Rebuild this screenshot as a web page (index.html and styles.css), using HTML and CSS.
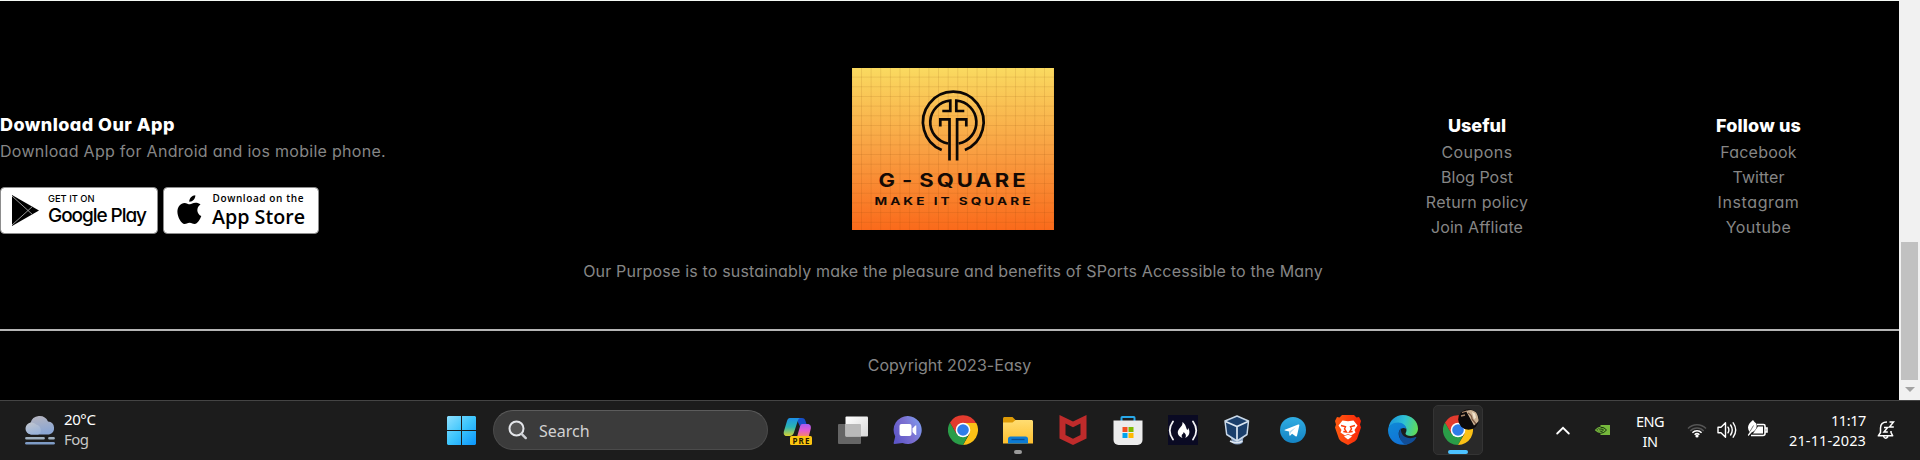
FILE: index.html
```html
<!DOCTYPE html>
<html lang="en">
<head>
<meta charset="utf-8">
<title>G-Square</title>
<link rel="stylesheet" href="styles.css">
</head>
<body>
<div class="viewport">
  <div class="page">
    <footer class="footer">
      <div class="columns">
        <section class="app">
          <h3 class="app-title">Download Our App</h3>
          <p class="app-note">Download App for Android and ios mobile phone.</p>
          <div class="badges">
            <svg class="badge" width="158" height="47" viewBox="0 0 158 47">
              <rect x=".5" y=".5" width="157" height="46" rx="4" fill="#fff" stroke="#8d8d8d"/>
              <path d="M12 8v31l27-15.500z" fill="#000"/>
              <path d="M12 9l21 19M12 38l21-19" stroke="#bbb" stroke-width=".8"/>
              <text x="48" y="14.500" font-size="9.500" textLength="46.500" lengthAdjust="spacingAndGlyphs" class="bt-medium">GET IT ON</text>
              <text x="48" y="34.500" font-size="19" textLength="99" class="bt-google">Google Play</text>
            </svg>
            <svg class="badge" width="156" height="47" viewBox="0 0 156 47">
              <rect x=".5" y=".5" width="155" height="46" rx="4" fill="#fff" stroke="#8d8d8d"/>
              <path d="M32.300 8.300c.3 3.200-2.700 6.700-6 6.500-.3-3.200 2.800-6.400 6-6.500zM37.500 17.500c-4.700 3-3.900 9.600.8 11.600-1.200 3.300-3.900 8-6.700 8-2 0-2.600-1.300-5-1.300s-3.100 1.300-5 1.300c-3.300 0-7.200-7.100-7.200-12.300 0-5.400 3.400-8.900 7.100-8.900 2.200 0 3.700 1.400 5.400 1.400 1.600 0 2.800-1.500 5.600-1.500 2 0 3.800.5 5 1.700z" fill="#000"/>
              <text x="49.500" y="15" font-size="10" textLength="91" class="bt-open">Download on the</text>
              <text x="49" y="36.500" font-size="20" textLength="93" lengthAdjust="spacingAndGlyphs" class="bt-open">App Store</text>
            </svg>
          </div>
        </section>
        <section class="brand">
          <svg class="logo" width="202" height="162" viewBox="0 0 202 162">
            <defs>
              <linearGradient id="sun" x2="0" y2="1"><stop offset="0" stop-color="#fada60"/><stop offset=".5" stop-color="#f9a143"/><stop offset="1" stop-color="#fa6a1b"/></linearGradient>
              <pattern id="grid" x="9" y="8.600" width="9.630" height="9.680" patternUnits="userSpaceOnUse"><path d="M.5 0v9.700M0 .5h9.700" stroke="#7b3d00" stroke-opacity=".15" stroke-width=".8"/></pattern>
            </defs>
            <rect width="202" height="162" fill="url(#sun)"/>
            <rect width="202" height="162" fill="url(#grid)"/>
            <g fill="none" stroke="#0b0705" stroke-width="2.700">
              <path d="M89.700 82a30.300 30.300 0 1 1 23.200 0"/>
              <path d="M96 75.500A21.600 21.600 0 0 1 98.300 32.700V43h-8"/>
              <path d="M106.600 75.500A21.600 21.600 0 0 0 104.300 32.700V43h8"/>
              <path d="M88.300 58.500V51.300h9.200V92.500"/>
              <path d="M114.300 58.500V51.300h-9.200V92.500"/>
            </g>
            <text x="26.500" y="118.700" font-size="18.500" textLength="150" lengthAdjust="spacingAndGlyphs" class="logo-name">G - SQUARE</text>
            <text x="22.500" y="136.700" font-size="10.300" textLength="159" lengthAdjust="spacingAndGlyphs" class="logo-tag">MAKE IT SQUARE</text>
          </svg>
          <p class="purpose">Our Purpose is to sustainably make the pleasure and benefits of SPorts Accessible to the Many</p>
        </section>
        <section class="links">
          <h3 class="useful-title">Useful</h3>
          <ul>
            <li class="ls-4">Coupons</li>
            <li class="ls-0">Blog Post</li>
            <li class="ls-2">Return policy</li>
            <li class="ls-1">Join Affliate</li>
          </ul>
        </section>
        <section class="links">
          <h3 class="follow-title">Follow us</h3>
          <ul>
            <li class="ls-2">Facebook</li>
            <li class="ls-0">Twitter</li>
            <li class="ls-6">Instagram</li>
            <li class="ls-4">Youtube</li>
          </ul>
        </section>
      </div>
      <p class="copyright">Copyright 2023-Easy</p>
    </footer>
  </div>
  <div class="scrollbar"><div class="thumb"></div><div class="arrow-down"></div></div>
</div>

<div class="taskbar">
  <div class="weather">
    <svg width="30" height="30" viewBox="0 0 30 30">
      <defs><linearGradient id="cloud" x2=".3" y2="1"><stop offset="0" stop-color="#b9b6bd"/><stop offset="1" stop-color="#8ba6d4"/></linearGradient>
      <linearGradient id="cloud2" x2=".4" y2="1"><stop offset="0" stop-color="#c3c6cd"/><stop offset="1" stop-color="#9bb4da"/></linearGradient></defs>
      <path d="M6 19.500a6 6 0 0 1-.5-11.500A9.300 9.300 0 0 1 23 6.500a6.600 6.600 0 0 1 1 13z" fill="url(#cloud)"/>
      <path d="M6.500 19.500a6 6 0 1 1 4.600-9.900c3 .7 4.500 3 4.700 5.700.2 2.200-.8 4.200-2.800 4.200z" fill="url(#cloud2)"/>
      <path d="M1.400 23.300h17.200M24.400 23.300h4.200" stroke="#9fb0c0" stroke-width="2.600" stroke-linecap="round"/>
      <path d="M1.400 28.300h27.200" stroke="#7f9cc6" stroke-width="2.600" stroke-linecap="round"/>
    </svg>
    <div class="weather-text"><div class="temp">20°C</div><div class="cond">Fog</div></div>
  </div>

  <svg class="start" width="29" height="29" viewBox="0 0 29 29">
    <defs><linearGradient id="win" gradientUnits="userSpaceOnUse" x2="29" y2="29"><stop offset="0" stop-color="#8ee0ff"/><stop offset=".5" stop-color="#3cc5fd"/><stop offset="1" stop-color="#0a94fb"/></linearGradient></defs>
    <path d="M1 0h13v14H0V1zM15 0h13l1 1v13H15zM0 15h14v14H1l-1-1zM15 15h14v13l-1 1H15z" fill="url(#win)"/>
  </svg>

  <div class="search">
    <svg width="20" height="20" viewBox="0 0 20 20"><circle cx="8.500" cy="8.500" r="7" fill="#555" stroke="#e4e6ea" stroke-width="2"/><path d="M13.600 13.800l4.200 4.300" stroke="#cdd0d4" stroke-width="2.400" stroke-linecap="round"/></svg>
    <span>Search</span>
  </div>

  <div class="apps">
    <svg class="app-icon" viewBox="0 0 30 30">
      <defs><linearGradient id="cp1" x2="0" y2="1"><stop offset="0" stop-color="#1c8fe8"/><stop offset=".5" stop-color="#2bb5b0"/><stop offset="1" stop-color="#d7d231"/></linearGradient>
      <linearGradient id="cp2" x2="0" y2="1"><stop offset="0" stop-color="#a45cf3"/><stop offset=".5" stop-color="#e35ccf"/><stop offset="1" stop-color="#f98a5b"/></linearGradient></defs>
      <path d="M13 3h6c2 0 3 1 3.500 3l1 3h-3.500c-2 0-2.500 1-3 2.500z" fill="#164fc9"/>
      <path d="M7 3h11c-2.500 0-3 2-3.600 4l-3.600 11c-.8 2-2 3-4 3H3.500C1 21 .2 18.500 1 16L4 6c.6-2 1.500-3 3-3z" fill="url(#cp1)"/>
      <path d="M19 9h5.500c3 0 3.800 2.500 3.200 5l-2 8H14l3-10.500c.5-1.700 1-2.500 2-2.500z" fill="url(#cp2)"/>
      <rect x="7" y="21" width="22" height="9" rx="1.500" fill="#fcc511"/>
      <text x="9.500" y="28.600" font-size="8" textLength="17" class="pre">PRE</text>
    </svg>
    <svg class="app-icon" viewBox="0 0 30 30">
      <defs><linearGradient id="tv" x2="1" y2="1"><stop offset="0" stop-color="#fff"/><stop offset="1" stop-color="#d7d7d7"/></linearGradient></defs>
      <rect x="0" y="9" width="23" height="20" rx="1" fill="#656565"/><rect x="7.500" y="1.500" width="22.500" height="20" rx="1" fill="url(#tv)"/><path d="M7.500 9H22a1 1 0 0 1 1 1v11.500H7.500z" fill="#b9b9b9"/>
    </svg>
    <svg class="app-icon" viewBox="0 0 30 30">
      <defs><linearGradient id="ch" x1="0" y1=".7" x2="1" y2=".2"><stop offset="0" stop-color="#5d56c8"/><stop offset=".5" stop-color="#7b6fd0"/><stop offset="1" stop-color="#7d9cf0"/></linearGradient></defs>
      <path d="M15 1a14 14 0 1 1-5.500 27L1.500 29c-.8 0-1-.5-.8-1.200l1.500-6.300A14 14 0 0 1 15 1z" fill="url(#ch)"/>
      <rect x="6.500" y="9" width="12" height="12" rx="2" fill="#fff"/><path d="M19.500 13.500l2.800-3h1v9.500h-1l-2.800-3z" fill="#fff"/>
    </svg>
    <svg class="app-icon" viewBox="0 0 30 30">
      <path d="M15 8H28.300A15 15 0 0 1 15 30l6.500-11.200z" fill="#fbc116"/><path d="M2 7.500L8.500 18.700 15 22l6-3.500L15 30A15 15 0 0 1 2 7.500z" fill="#2a9d48"/><path d="M15 8L8.500 18.700 2 7.500a15 15 0 0 1 26 .5z" fill="#e33b2e"/>
      <circle cx="15" cy="15" r="7.300" fill="#fff"/><circle cx="15" cy="15" r="5.800" fill="#2f7de9"/>
    </svg>
    <div class="app-slot">
      <svg class="app-icon" viewBox="0 0 30 30">
        <defs><linearGradient id="fo" x2="0" y2="1"><stop offset="0" stop-color="#ffdd72"/><stop offset="1" stop-color="#fdbf2e"/></linearGradient></defs>
        <path d="M0 3.500C0 2.700.7 2 1.500 2h8l3.500 3.500L11 9H0z" fill="#dd9a06"/><path d="M0 7.500h9.500L12.500 5H28.500c.8 0 1.500.7 1.500 1.500V28.500H0z" fill="url(#fo)"/>
        <path d="M5 28.500v-4.500a2.500 2.500 0 0 1 2.500-2.500h15A2.500 2.500 0 0 1 25 24v4.500z" fill="#0c7bd4"/><path d="M8.500 24.500h13" stroke="#084f94" stroke-width="1.300"/>
      </svg>
      <span class="dot"></span>
    </div>
    <svg class="app-icon" viewBox="0 0 30 30"><path d="M1.500 0L15 6.500 28.500 0v23.500L15 30 1.500 23.500zM7.500 8.500v11.500L15 23.700l7.500-3.700V8.500L15 12.300z" fill="#bf2b2b" fill-rule="evenodd"/></svg>
    <svg class="app-icon" viewBox="0 0 30 30">
      <path d="M8.500 7V2.700c0-.5.3-.8.800-.8h11.400c.5 0 .8.300.8.800V7" fill="none" stroke="#28a8e8" stroke-width="2"/>
      <path d="M.5 5.500h29V25a5 5 0 0 1-5 5h-19a5 5 0 0 1-5-5z" fill="#ececec"/>
      <path d="M9.500 12h5v5h-5z" fill="#f25022"/><path d="M15.500 12h5v5h-5z" fill="#7fba00"/><path d="M9.500 18h5v5h-5z" fill="#00a4ef"/><path d="M15.500 18h5v5h-5z" fill="#ffb900"/>
    </svg>
    <svg class="app-icon" viewBox="0 0 30 30">
      <rect width="30" height="30" fill="#0a0a23"/><path d="M5 6.500q-6.500 9 0 18M25 6.500q6.500 9 0 18" fill="none" stroke="#f2f2f5" stroke-width="1.800" stroke-linecap="round"/>
      <path d="M14.500 7c3.500 2.500 3 5 4.800 8 .9-.7.800-1.500.6-2.300 2.600 3.500 2 8-2.600 10.300 1.300-2.500.6-4-1.700-6 .2 2-2 2-2 4 0 .8.400 1.500 1 2-4.800-1.700-6.300-5.800-3.200-9.500 2.200-2.500 3.300-3.500 3.100-6.500z" fill="#fff"/>
    </svg>
    <svg class="app-icon" viewBox="0 0 30 30">
      <path d="M7.500 22h13l-1 6q-5.500 3-10 0z" fill="#7f99bd"/><path d="M7 26q6.500 3.500 12.500 0" stroke="#dfe8f3" stroke-width="1.500" fill="none"/>
      <path d="M14 1L25.500 6 24 19.500 14 26 3.700 19.500 2 6z" fill="#1b3f6b" stroke="#c9d8e8" stroke-width="1.500" stroke-linejoin="round"/>
      <path d="M2.500 6.500L14 11.500l11-5M14 11.500V25.500" stroke="#dbe6f1" stroke-width="1.700" fill="none"/>
    </svg>
    <svg class="app-icon" viewBox="0 0 30 30">
      <defs><linearGradient id="tg" x2="0" y2="1"><stop offset="0" stop-color="#30ade3"/><stop offset="1" stop-color="#1483c3"/></linearGradient></defs>
      <circle cx="15" cy="15" r="13" fill="url(#tg)"/><path d="M6.800 14.700L20.200 9.500c.8-.3 1.300.1 1.100 1L19 20.800c-.2.900-.8 1-1.500.5l-3.400-2.500-1.800 1.700c-.5.4-.9.300-.9-.4l-.4-3.500-4.100-1.200c-.6-.2-.6-.5-.1-.7z" fill="#fff"/><path d="M11.300 16.500l6.500-4.300-5 5.200-.8 2.500z" fill="#b4d9ee"/>
    </svg>
    <svg class="app-icon" viewBox="0 0 30 30">
      <defs><linearGradient id="br" x2="1" y2="0"><stop offset="0" stop-color="#ff5a10"/><stop offset="1" stop-color="#f9260a"/></linearGradient></defs>
      <path d="M9 0h12l2.500 2.500L26 2l2 4-1 3.500 1 3-4 11.500L22 26.300 15 30l-7-3.700L6 24 2 12.500l1-3L2 6l2-4 2.500.5z" fill="url(#br)"/>
      <path d="M9.500 5.500L15 6.200l5.500-.7 4 5-3 4.500 1 2.500-4.500 3L15 18.700l-3 1.800-4.500-3 1-2.500-3-4.500z" fill="#fff"/><path d="M11 21.500l4-2 4 2-4 3z" fill="#fff"/>
      <path d="M8 10.500l4.500 1.300-1 2.200 2 3-3.200-.5M22 10.500l-4.500 1.300 1 2.200-2 3 3.200-.5" fill="none" stroke="#fb3d0c" stroke-width="1.400"/>
    </svg>
    <svg class="app-icon" viewBox="0 0 30 30">
      <defs><linearGradient id="eg1" x1="0" y1=".4" x2="1" y2=".6"><stop offset="0" stop-color="#1a95dd"/><stop offset=".5" stop-color="#2fc2d4"/><stop offset="1" stop-color="#61dc55"/></linearGradient>
      <linearGradient id="eg2" x2=".5" y2="1"><stop offset="0" stop-color="#0f8ad6"/><stop offset="1" stop-color="#1173d6"/></linearGradient></defs>
      <path d="M.5 13C1.500 5.500 7.500 0 15 0c9 0 15 6.500 15 13.500 0 4.500-3 7.500-7 7.500-3.200 0-5.500-1.200-5.500-2.500 0-.8 1-1.300 1-3.500 0-3.500-3.500-6.500-8-6.500-5 0-8.500 2.200-10 4.500z" fill="url(#eg1)"/>
      <path d="M0 15C0 11 4.500 7.500 10 7.500c5 0 8.500 3.500 8.500 7.500 0-2.500-6-3-7.500 1.500-1.500 5 2.500 11 8.500 12.700C9.500 32 0 25.500 0 15z" fill="url(#eg2)"/>
      <path d="M13 13c-3 3-3 12 4 16.700 5.500-.5 9-3.200 11.300-7 .3-.6-.2-.8-.7-.6C21 25 12 22 13 13z" fill="#114d96"/>
    </svg>
    <div class="app-slot active">
      <svg class="app-icon" viewBox="0 0 30 30">
        <path d="M2 7.500L8.500 18.700 15 22l6-3.500L15 30A15 15 0 0 1 2 7.500z" fill="#2a9d48"/><path d="M15 8H28.300A15 15 0 0 1 15 30l6.500-11.200z" fill="#fbc116"/><path d="M15 8L8.500 18.700 2 7.500a15 15 0 0 1 26 .5z" fill="#e33b2e"/>
        <circle cx="15" cy="15" r="7.300" fill="#fff"/><circle cx="15" cy="15" r="5.800" fill="#2f7de9"/>
      </svg>
      <svg class="avatar" viewBox="0 0 21 21">
        <defs><clipPath id="av"><circle cx="10.500" cy="10.500" r="10.300"/></clipPath></defs>
        <g clip-path="url(#av)"><path d="M0 0h21v21H0z" fill="#0d0a0a"/><path d="M8 2q7-3 11 2l2 8-5 4.500-3-5.500z" fill="#cbb294"/><path d="M10 4q4 2 4 6l4 5" stroke="#7a5844" stroke-width="1.300" fill="none"/><path d="M4 3.500l5-1.500M3 7l4-1" stroke="#a9876a" stroke-width="1.300"/><path d="M14 3l3 1.500 1 4-2 2z" fill="#f0e2cc"/></g>
      </svg>
      <span class="active-bar"></span>
    </div>
  </div>

  <div class="tray">
    <svg class="caret" width="14" height="9" viewBox="0 0 14 9"><path d="M1.200 7.500L7 1.800l5.800 5.700" fill="none" stroke="#fff" stroke-width="1.800" stroke-linecap="round"/></svg>
    <div class="nvidia"><svg width="15" height="10" viewBox="0 0 15 10"><path d="M5.500 0H15v10H5.500z" fill="#76b93c"/><path d="M.5 5Q5.500-.5 10.500 5 6 10 .5 5zM3 5q2.500-2.500 5.500 0Q6 7.500 3 5z" fill="none" stroke="#76b93c" stroke-width="1.100"/><path d="M5.500 2.200q4 0 6 2.800-2.500 3.300-6 3.300M5.500 4q2 0 3 1-1 1.500-3 1.500" fill="none" stroke="#173010"/></svg></div>
    <div class="lang"><div>ENG</div><div>IN</div></div>
    <svg class="wifi" width="20" height="16" viewBox="0 0 20 16"><path d="M1 6.500a12.500 12.500 0 0 1 18 0M3.300 9a9.200 9.200 0 0 1 13.400 0" fill="none" stroke="#555" stroke-width="1.500"/><path d="M5.400 10.700a6.500 6.500 0 0 1 9.200 0M7.600 12.800a3.400 3.400 0 0 1 4.800 0" fill="none" stroke="#fff" stroke-width="1.500"/><circle cx="10" cy="14" r="1.600" fill="#fff"/></svg>
    <svg class="speaker" width="20" height="18" viewBox="0 0 20 18"><path d="M1 6.200h3L8.500 1.800v14.400L4 11.800H1z" fill="none" stroke="#fff" stroke-width="1.400" stroke-linejoin="round"/><path d="M11 6.200q1.800 2.800 0 5.600M13.600 4q3.300 5 0 10M16.200 1.800q5 7.200 0 14.400" fill="none" stroke="#fff" stroke-width="1.400" stroke-linecap="round"/></svg>
    <svg class="battery" width="21" height="18" viewBox="0 0 21 18"><path d="M10 4.500h6.500q1.500 0 1.500 1.500v7.500q0 2-2 2H4M18 8h2v4h-2" fill="none" stroke="#fff" stroke-width="1.600"/><path d="M11 6.500h5v7H6z" fill="#fff"/><path d="M6 0q2 3 3.300 3.500Q11 10 4.500 12.500L1.500 16 .8 15l2-3Q-2 6 6 0z" fill="#fff"/><path d="M6.500 5.500L3 11.500" stroke="#555" stroke-width=".8"/></svg>
    <div class="clock"><div class="time">11:17</div><div class="date">21-11-2023</div></div>
    <svg class="bell" width="18" height="20" viewBox="0 0 18 20"><path d="M10 2Q3.500 2 3.500 8v4.500L1.300 15.800h14.400L14 12.500V11M6.500 16.500q2 3.500 4.500 0" fill="none" stroke="#fff" stroke-width="1.500" stroke-linejoin="round"/><path d="M7 7.500h3.600L7 12h3.800M12.500 2h4L12.500 7h4.300" fill="none" stroke="#fff" stroke-width="1.500"/></svg>
  </div>
</div>
</body>
</html>
```
FILE: styles.css
```css
* { box-sizing: border-box; margin: 0; padding: 0; }
body { width: 1920px; height: 460px; overflow: hidden; background: #1c1c1c; }
svg { display: block; flex: none; }

.viewport { display: flex; height: 400px; }
.page { width: 1899px; background: #000; border-top: 1px solid #f4f8f4; }

.footer { font: 400 16px/25px Inter, "Open Sans", sans-serif; font-feature-settings: "cv11"; color: #868686; }
.footer h3 { font-size: 18px; font-weight: 800; line-height: 28px; color: #fff; }
.columns { display: grid; grid-template-columns: 570px 766px 282px 281px; height: 330px; border-bottom: 2px solid #b5b5b5; }

.app { padding-top: 110px; }
.app-title { letter-spacing: .45px; }
.app-note { letter-spacing: .29px; }
.badges { display: flex; gap: 5px; padding-top: 23px; }
.bt-medium { font-family: Inter, sans-serif; font-weight: 500; }
.bt-google { font-family: Inter, sans-serif; font-weight: 500; font-feature-settings: "cv11"; }
.bt-open { font-family: "Open Sans", sans-serif; font-weight: 600; }

.brand { display: flex; flex-direction: column; align-items: center; padding-top: 67px; }
.logo-name { font-family: Inter, sans-serif; font-weight: 700; fill: #140a05; letter-spacing: 2.5px; word-spacing: -3.5px; }
.logo-tag { font-family: Inter, sans-serif; font-weight: 700; fill: #140a05; letter-spacing: 2.3px; }
.purpose { padding-top: 29px; letter-spacing: .18px; white-space: nowrap; }

.links { padding-top: 111px; text-align: center; }
.links ul { list-style: none; }
.follow-title { letter-spacing: .15px; }
.ls-0 { letter-spacing: .05px; }
.ls-1 { letter-spacing: .1px; }
.ls-2 { letter-spacing: .23px; }
.ls-4 { letter-spacing: .45px; }
.ls-6 { letter-spacing: .6px; }
.copyright { padding-top: 22px; text-align: center; letter-spacing: .05px; }

.scrollbar { width: 21px; background: #f1f1f1; padding: 242px 2px 0; display: flex; flex-direction: column; align-items: center; }
.thumb { width: 17px; height: 138px; background: #c1c1c1; }
.arrow-down { margin-top: 7px; border: 5px solid transparent; border-top-color: #a3a3a3; border-bottom: 0; }

.taskbar { display: flex; align-items: center; height: 60px; padding-bottom: 1px; background: #1c1c1c; border-top: 1px solid #444; font: 400 14.5px/20px "Noto Sans", sans-serif; color: #fff; }
.weather { display: flex; align-items: center; gap: 9px; width: 422px; margin-left: 25px; }
.weather-text { padding-bottom: 2px; font-size: 15px; }
.temp { letter-spacing: -.4px; }
.cond { color: #c8c8c8; letter-spacing: -.6px; }
.start { margin-top: 1px; }
.search { display: flex; align-items: center; gap: 11px; width: 275px; height: 40px; margin-left: 17px; padding-left: 14px; border: 1px solid #4b4b4b; border-top-color: #5c5c5c; border-radius: 20px; background: #3b3b3b; color: #d2d2d2; font-size: 16px; }
.search span { padding-top: 2px; }
.apps { display: flex; align-items: center; gap: 25px; margin-left: 15px; }
.app-icon { width: 30px; height: 30px; }
.pre { font-family: "Noto Sans", sans-serif; font-weight: 700; fill: #241a00; }
.app-slot { position: relative; }
.dot { position: absolute; left: 11px; top: 35px; width: 8px; height: 4px; border-radius: 2px; background: #9a9a9a; }
.active { width: 50px; height: 50px; margin: 0 -10px; padding: 10px; border: 1px solid #343434; border-radius: 5px; background: #292929; }
.active .app-icon { margin: -1px; }
.avatar { position: absolute; left: 24px; top: 3px; width: 21px; height: 21px; }
.active-bar { position: absolute; left: 14px; top: 44px; width: 20px; height: 4px; border-radius: 2px; background: #4cc2ff; }

.tray { display: flex; align-items: center; margin-left: 83px; }
.nvidia { margin-left: 25px; }
.lang { width: 28px; margin-left: 26px; text-align: center; letter-spacing: -.5px; padding-top: 2px; }
.wifi { margin-left: 23px; }
.speaker { margin-left: 10px; }
.battery { margin-left: 10px; margin-top: -3px; }
.clock { width: 98px; text-align: right; padding-bottom: 1px; }
.time { letter-spacing: -.4px; }
.date { letter-spacing: .13px; }
.bell { margin-left: 11px; }
```
